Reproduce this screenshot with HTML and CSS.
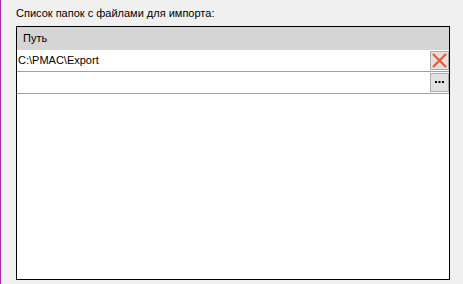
FILE: index.html
```html
<!DOCTYPE html>
<html>
<head>
<meta charset="utf-8">
<link rel="stylesheet" href="styles.css">
</head>
<body>
<div class="frame">
  <div class="label">Список папок с файлами для импорта:</div>
  <div class="grid">
    <div class="head">Путь</div>
    <div class="row">
      <span class="cell">C:\PMAC\Export</span>
      <button class="btn" aria-label="Удалить">
        <svg width="15" height="15" viewBox="0 0 15 15"><path d="M1 1 L14 14 M14 1 L1 14" stroke="#e2603f" stroke-width="2.4" fill="none"/></svg>
      </button>
    </div>
    <div class="row">
      <span class="cell"></span>
      <button class="btn" aria-label="Обзор">
        <svg width="11" height="3" viewBox="0 0 11 3"><rect x="1" y="0" width="2" height="2" fill="#000"/><rect x="4.5" y="0" width="2" height="2" fill="#000"/><rect x="8" y="0" width="2" height="2" fill="#000"/></svg>
      </button>
    </div>
  </div>
</div>
</body>
</html>
```

FILE: styles.css
```css
html, body {
  margin: 0;
  padding: 0;
  background: #f0f0f0;
}
body {
  font-family: "Liberation Sans", Arial, sans-serif;
  font-size: 11px;
  color: #000;
}
.frame {
  width: 460px;
  height: 284px;
  border-left: 1px solid #a82aa8;
  border-right: 1px solid #a82aa8;
  padding-left: 15px;
  box-sizing: content-box;
}
.label {
  padding-top: 6px;
  height: 26px;
  line-height: 14px;
  box-sizing: border-box;
}
.grid {
  width: 434px;
  height: 254px;
  border: 1px solid #000;
  box-sizing: border-box;
  background: #fff;
}
.head {
  height: 23px;
  background: #d5d5d5;
  padding-left: 6px;
  line-height: 23px;
}
.row {
  height: 22px;
  border-bottom: 1px solid #a0a0a0;
  box-sizing: border-box;
  display: flex;
  align-items: center;
  justify-content: space-between;
  padding-left: 1px;
  padding-right: 0;
}
.cell {
  line-height: 21px;
}
.btn {
  width: 19px;
  height: 19px;
  margin: 0;
  padding: 0;
  border: 1px solid #adadad;
  background: #e1e1e1;
  display: flex;
  align-items: center;
  justify-content: center;
}
.btn svg {
  display: block;
}
```
